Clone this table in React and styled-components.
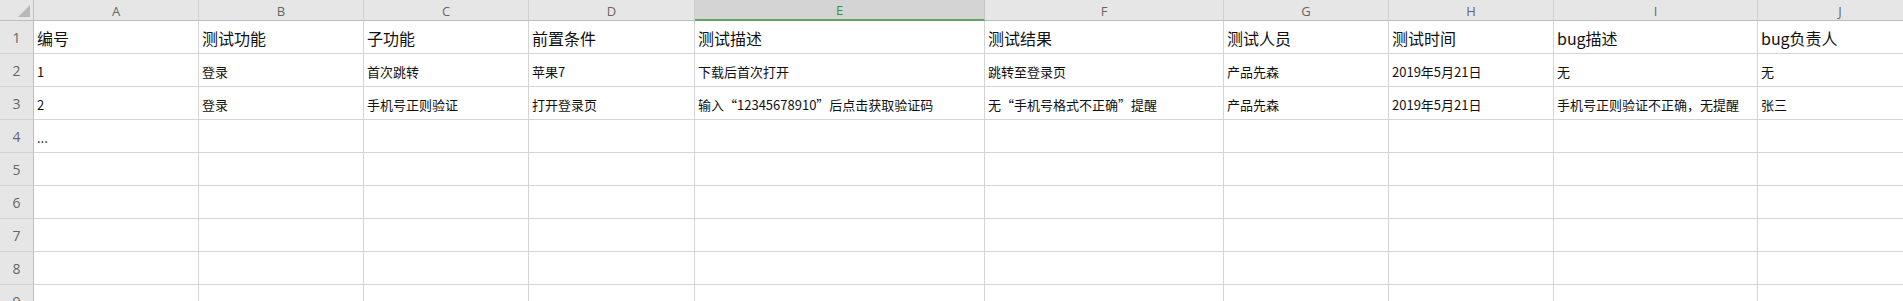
import React from 'react'
import styled, { createGlobalStyle } from 'styled-components'

const GlobalStyle = createGlobalStyle`
  html, body {
    margin: 0;
    padding: 0;
    background: #fff;
    overflow: hidden;
  }
  body {
    font-family: "Noto Sans CJK SC", "Noto Sans", sans-serif;
  }
`

const columns = [
  { key: 'A', width: 165 },
  { key: 'B', width: 165 },
  { key: 'C', width: 165 },
  { key: 'D', width: 166 },
  { key: 'E', width: 290, selected: true },
  { key: 'F', width: 239 },
  { key: 'G', width: 165 },
  { key: 'H', width: 165 },
  { key: 'I', width: 204 },
  { key: 'J', width: 165 },
]

const rows = [
  { cells: ['编号', '测试功能', '子功能', '前置条件', '测试描述', '测试结果', '测试人员', '测试时间', 'bug描述', 'bug负责人'], head: true },
  { cells: ['1', '登录', '首次跳转', '苹果7', '下载后首次打开', '跳转至登录页', '产品先森', '2019年5月21日', '无', '无'] },
  { cells: ['2', '登录', '手机号正则验证', '打开登录页', '输入“12345678910”后点击获取验证码', '无“手机号格式不正确”提醒', '产品先森', '2019年5月21日', '手机号正则验证不正确，无提醒', '张三'] },
  { cells: ['...'] },
  { cells: [] },
  { cells: [] },
  { cells: [] },
  { cells: [] },
  { cells: [] },
]

const Sheet = styled.div`
  width: 1903px;
  height: 301px;
  overflow: hidden;
`

const Grid = styled.div`
  display: grid;
  grid-template-columns: 34px ${columns.map(c => `${c.width}px`).join(' ')};
  grid-auto-rows: 33px;
  grid-template-rows: 21px;
`

const Corner = styled.div`
  position: relative;
  background: #e6e6e6;
  border-right: 1px solid #bdbdbd;
  border-bottom: 1px solid #bdbdbd;

  &::after {
    content: '';
    position: absolute;
    right: 3px;
    bottom: 3px;
    width: 0;
    height: 0;
    border-left: 12px solid transparent;
    border-bottom: 12px solid #b8b8b8;
  }
`

const ColHeader = styled.div`
  display: flex;
  align-items: center;
  justify-content: center;
  background: ${p => (p.$selected ? '#d4d4d4' : '#e6e6e6')};
  border-right: 1px solid ${p => (p.$selected ? '#c4c4c4' : '#d0d0d0')};
  border-bottom: ${p => (p.$selected ? '2px solid #5fa45f' : '1px solid #bdbdbd')};
  color: ${p => (p.$selected ? '#3f8f3f' : '#666')};
  font-family: "Open Sans", "Noto Sans", sans-serif;
  font-size: 13px;
  padding-top: 1px;
  box-sizing: border-box;
`

const RowHeader = styled.div`
  display: flex;
  align-items: center;
  justify-content: center;
  background: #e6e6e6;
  border-right: 1px solid #bdbdbd;
  border-bottom: 1px solid #d4d4d4;
  color: #666;
  font-family: "Open Sans", "Noto Sans", sans-serif;
  font-size: 14px;
  padding-top: 1px;
`

const Cell = styled.div`
  display: flex;
  align-items: center;
  padding: 2px 0 0 3px;
  border-right: 1px solid #d4d4d4;
  border-bottom: 1px solid #d4d4d4;
  color: #111;
  font-size: ${p => (p.$head ? '16px' : '13px')};
  white-space: nowrap;
  overflow: hidden;
  min-width: 0;
`

export default function App() {
  return (
    <Sheet>
      <GlobalStyle />
      <Grid>
        <Corner />
        {columns.map(c => (
          <ColHeader key={c.key} $selected={c.selected}>{c.key}</ColHeader>
        ))}
        {rows.map((row, r) => (
          <React.Fragment key={r}>
            <RowHeader>{r + 1}</RowHeader>
            {columns.map((c, i) => (
              <Cell key={c.key} $head={row.head}>{row.cells[i] || ''}</Cell>
            ))}
          </React.Fragment>
        ))}
      </Grid>
    </Sheet>
  )
}
